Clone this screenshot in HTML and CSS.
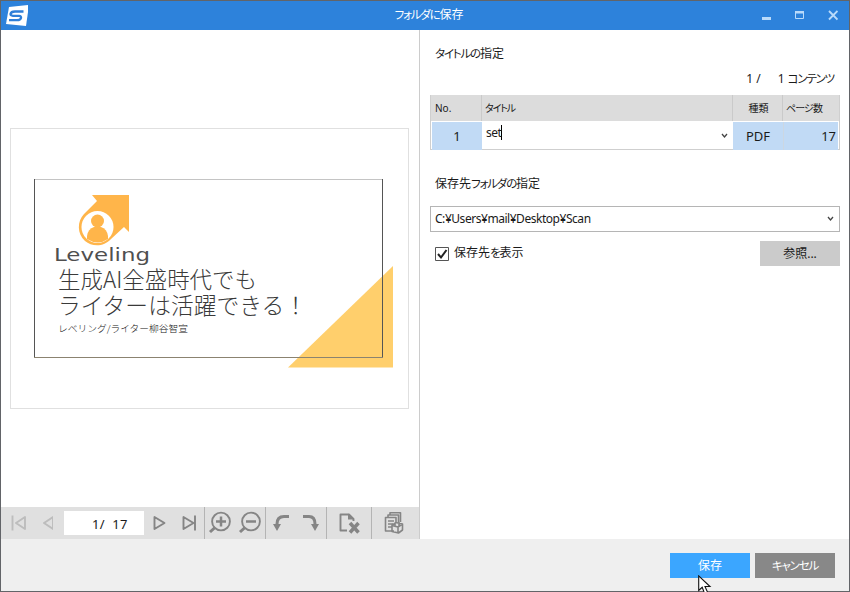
FILE: index.html
```html
<!DOCTYPE html>
<html lang="ja">
<head>
<meta charset="utf-8">
<title>フォルダに保存</title>
<link rel="stylesheet" href="styles.css">
</head>
<body>
<div class="window">
  <header class="titlebar">
    <svg class="app-logo" width="26" height="24" viewBox="0 0 26 24"><path d="M7 3 27 1 24 22 4 20Z" fill="#fff"/><path d="M21.500 7.500H13Q9 7.500 8.500 10Q8.500 11.500 11 11.800H17Q19.500 12 19 14Q18.500 16.200 15 16.200H7" fill="none" stroke="#2f7fd8" stroke-width="2.300"/></svg>
    <h1><span class="kana">フォルダに</span>保存</h1>
    <div class="controls">
      <svg width="80" height="16" viewBox="0 0 80 16"><path d="M4 10h9v3H4z" fill="#b9dafa"/><path d="M37.500 4.500h8v7h-8z" fill="none" stroke="#b9dafa"/><path d="M37 4h9v2.500h-9z" fill="#b9dafa"/><path d="m71 4 8.500 8.500m0-8.500L71 12.500" stroke="#b9dafa" stroke-width="1.900"/></svg>
    </div>
  </header>
  <main class="content">
    <section class="preview">
      <div class="page-area">
        <svg class="page" width="398" height="280" viewBox="11 129 397 279">
          <path d="M34 179.500H382" stroke="#c4c4c4" fill="none"/>
          <path d="M288 367.500 393 266V367.500Z" fill="#ffcf6c"/>
          <path d="M34.500 179V358M382.500 179V358" stroke="#555" fill="none"/>
          <path d="M34 357.500H383" stroke="#8b8370" fill="none"/>
          <path d="M92 195H129V232L124 227 111 239C104 247 92 247 85 241C77 234 77 221 84 214L97 201Z" fill="#ffb54a"/>
          <circle cx="97.500" cy="227" r="16" fill="#fff"/>
          <circle cx="97.500" cy="221" r="6.500" fill="#ffb54a"/>
          <path d="M87 239V236Q88 229 94 227H101Q107 229 108 236V239Q98 246 87 239Z" fill="#ffb54a"/>
          <text class="brand" x="54" y="261" textLength="96" lengthAdjust="spacingAndGlyphs">Leveling</text>
          <text class="headline" x="58" y="288" textLength="199" lengthAdjust="spacingAndGlyphs">生成AI全盛時代でも</text>
          <text class="headline" x="58" y="314" textLength="249" lengthAdjust="spacingAndGlyphs">ライターは活躍できる！</text>
          <text class="author" x="58" y="332" textLength="130" lengthAdjust="spacingAndGlyphs">レベリング/ライター柳谷智宣</text>
        </svg>
      </div>
      <nav class="toolbar">
        <div class="tools pager">
          <svg class="off" width="52" height="32" viewBox="1 507 52 32"><path d="M12.500 515.500v15M25 517v12l-9-6zM53 517v12l-9-6z"/></svg>
          <div class="page-number">1/&nbsp; 17</div>
          <svg width="52" height="32" viewBox="150 507 52 32"><path d="M154.500 517v12l10-6zM183.500 517v12l10-6zM195 515.500v15"/></svg>
        </div>
        <div class="tools zoomers">
          <svg width="60" height="32" viewBox="205 507 60 32"><circle cx="221" cy="521.500" r="8.900"/><circle cx="251" cy="521.500" r="8.900"/><path class="sign" d="M216 521.500h10M221 516.500v10M246 521.500h10"/><path class="thick" d="m215 527.500-5 4.500M245 527.500l-5 4.500"/></svg>
        </div>
        <div class="tools turners">
          <svg width="60" height="32" viewBox="266 507 60 32"><path class="thick" d="M289 516.500H284Q277 516.500 277 524V526M303 516.500H309Q315 516.500 315 524V526"/><path class="solid" d="M273 524h8l-4 7zM311 524h8l-4 7z"/></svg>
        </div>
        <div class="tools remover">
          <svg width="44" height="32" viewBox="327 507 44 32"><path d="M347 530.500H340.500V514.500H349L353.500 519V521"/><path class="solid" d="M348 513.500v6h6z"/><path class="cross" d="m350 523 8.500 9.500m0-9.500-8.500 9.500"/></svg>
        </div>
        <div class="tools">
          <svg class="pages" width="46" height="32" viewBox="372 507 46 32"><path d="M390 515V512.700H400.500V522M388 517.500V515H398.500V522M394 531H385.500V517.500H396V523M388 521h6M388 524h5M388 527h4M392 525.500 396 522.500 402.500 524V530L398.500 533 392 531.500ZM392 525.500 398 527V533M398 527 402.500 524M395 526V524M399 526V522"/></svg>
        </div>
      </nav>
    </section>
    <section class="settings">
      <h2><span class="kana">タイトルの</span>指定</h2>
      <p class="count"><span>1 /</span><span>1 <span class="kana">コンテンツ</span></span></p>
      <div class="table">
        <div class="row head"><span class="no">No.</span><span class="small-kana">タイトル</span><span class="type">種類</span><span class="pages-head">ページ数</span></div>
        <div class="row data">
          <div class="cell">1</div>
          <div class="entry"><span class="typed">set</span><svg class="chev" width="7" height="6" viewBox="0 0 7 6"><path d="m1 1 2.500 3L6 1"/></svg></div>
          <div class="cell">PDF</div>
          <div class="cell amount">17</div>
        </div>
      </div>
      <h2 class="dest">保存先<span class="kana">フォルダの</span>指定</h2>
      <div class="select"><span class="path">C:¥Users¥mail¥Desktop¥Scan</span><svg class="chev" width="7" height="6" viewBox="0 0 7 6"><path d="m1 1 2.500 3L6 1"/></svg></div>
      <div class="options">
        <div class="check"><svg width="14" height="14" viewBox="0 0 14 14"><path d="M.5.5h13v13H.5z" fill="#fff" stroke="#555"/><path d="m3 7 3 3.500 5.500-7.500" fill="none" stroke="#222" stroke-width="2"/></svg><span>保存先<span class="kana">を</span>表示</span></div>
        <div class="button browse">参照...</div>
      </div>
    </section>
  </main>
  <footer class="actions">
    <div class="button save">保存</div>
    <div class="button cancel"><span class="kana">キャンセル</span></div>
  </footer>
</div>
<svg class="cursor" width="14" height="20" viewBox="0 0 14 20"><path d="M.7.9V15.500L4.200 12.300 7 19.500 10 18.300 7 11.500H12Z" fill="#fff" stroke="#111" stroke-width="1.100"/></svg>
</body>
</html>
```
FILE: styles.css
```css
* { box-sizing: border-box; }
body {
  margin: 0;
  position: relative;
  width: 850px;
  height: 592px;
  overflow: hidden;
  font: 12px/18px "Noto Sans", "Noto Sans CJK JP", sans-serif;
  font-feature-settings: "palt";
  color: #1a1a1a;
}
h1, h2, p { margin: 0; font-size: 12px; font-weight: 400; }
svg { display: block; flex: none; }
.kana { font-size: 11.500px; letter-spacing: -1.200px; }
.window {
  width: 850px;
  height: 592px;
  border: 1px solid #626468;
  display: flex;
  flex-direction: column;
  background: #fff;
}
.titlebar {
  height: 29px;
  flex: none;
  background: #2d82db;
  color: #fff;
  display: grid;
  grid-template-columns: 90px 1fr 90px;
  align-items: center;
}
.app-logo { margin-left: 1px; }
.titlebar h1 { text-align: center; padding: 0 0 1px 8px; }
.controls { display: flex; justify-content: flex-end; padding: 0 11px 1px 0; }
.content { height: 509px; display: flex; }
.preview {
  width: 419px;
  border-right: 1px solid #ccc;
  display: flex;
  flex-direction: column;
}
.page-area { flex: 1; padding: 98px 0 0 9px; }
.page { width: 399px; height: 281px; border: 1px solid #e0e0e0; }
.brand { font: 400 18px "DejaVu Sans", sans-serif; fill: #4f4f4f; }
.headline { font: 300 23px "Noto Sans CJK JP", sans-serif; fill: #3a3a3a; }
.author { font: 300 9px "Noto Sans CJK JP", sans-serif; fill: #111; }
.toolbar { height: 32px; background: #e0e0e0; display: flex; }
.tools { border-right: 1px solid #b4b4b4; display: flex; align-items: center; }
.tools:last-child { border: 0; }
.tools svg { fill: none; stroke: #858585; stroke-width: 1.900; stroke-linejoin: round; }
.tools .off { stroke: #bdbdbd; }
.tools .thick { stroke-width: 3; }
.tools .cross { stroke-width: 3.500; }
.tools .sign { stroke-width: 2.500; }
.tools .solid { fill: #858585; stroke: none; }
.tools .pages { stroke-width: 1.600; }
.pager { width: 204px; gap: 6px; }
.pager .off { width: 57px; padding-right: 5px; }
.page-number { width: 80px; height: 24px; background: #fff; font-size: 13px; line-height: 26px; padding-left: 28px; white-space: nowrap; letter-spacing: .300px; }
.zoomers, .turners { width: 61px; }
.remover { width: 45px; }
.settings { flex: 1; padding: 15px 9px 0 10px; }
h2 { padding-left: 5px; height: 18px; }
.count { height: 18px; margin-top: 7px; padding-right: 6px; display: flex; justify-content: flex-end; gap: 17px; }
.table { margin-top: 7px; height: 55px; border: 1px solid #cfcfcf; border-top: 0; }
.row { display: grid; grid-template-columns: 51px 251px 50px 1fr; }
.head { height: 26px; background: #dcdcdc; font-size: 10px; line-height: 26px; }
.head span { padding-left: 3px; border-right: 1px solid #cacaca; }
.head span:last-child { border: 0; }
.head .no { padding-left: 4px; }
.head .type { text-align: center; padding-left: 2px; }
.head .small-kana { letter-spacing: -1.200px; }
.head .pages-head { padding-left: 3px; letter-spacing: -.900px; }
.data { height: 28px; padding: 1px; font-size: 13px; line-height: 28px; grid-template-columns: 50px 251px 50px 1fr; }
.cell { background: #c1daf5; text-align: center; }
.cell.amount { text-align: right; padding-right: 2px; border-left: 1px solid #ccd7e2; }
.entry { display: flex; justify-content: space-between; align-items: center; padding: 0 5px 0 4px; font-size: 12px; }
.typed { line-height: 15px; letter-spacing: -.500px; border-right: 1px solid #000; margin-bottom: 7px; }
.chev { fill: none; stroke: #444; stroke-width: 1.300; }
.dest { margin-top: 25px; }
.select { margin-top: 13px; height: 26px; border: 1px solid #b5b5b5; padding: 0 5px 0 4px; display: flex; align-items: center; justify-content: space-between; }
.path { letter-spacing: -.460px; padding-bottom: 1px; }
.options { margin-top: 9px; display: flex; justify-content: space-between; align-items: center; }
.check { display: flex; align-items: center; gap: 5px; padding-left: 5px; }
.check > span { padding-bottom: 1px; }
.button { width: 80px; height: 25px; line-height: 25px; text-align: center; }
.browse { background: #cbcbcb; }
.actions { flex: 1; background: #efefef; display: flex; justify-content: flex-end; gap: 5px; padding: 14px 14px 0 0; color: #fff; }
.save { background: #3ba6ff; }
.cancel { background: #888; }
.cursor { position: absolute; left: 698px; top: 575px; }
```
